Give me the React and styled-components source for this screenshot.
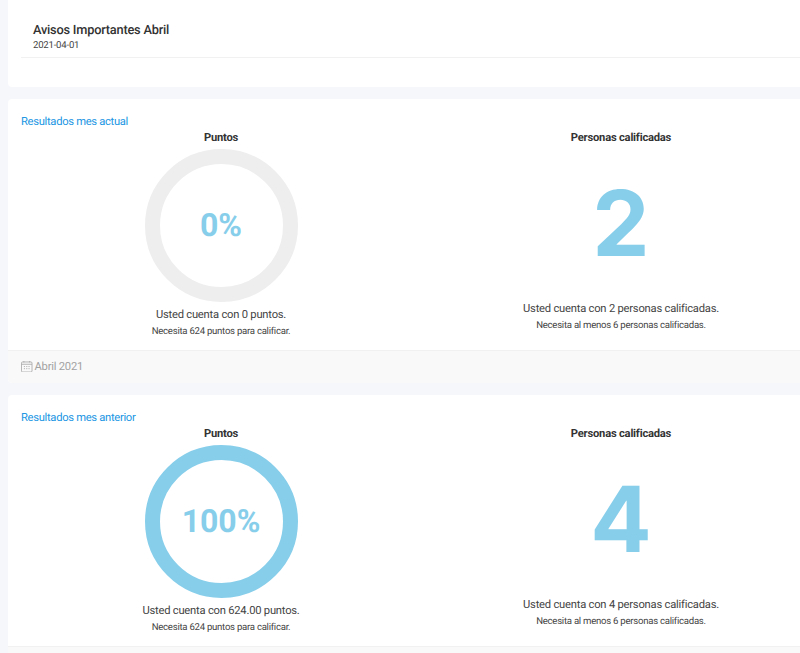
import React from 'react';
import styled, { createGlobalStyle } from 'styled-components';

const GlobalStyle = createGlobalStyle`
    html, body {
        margin: 0;
        padding: 0;
        height: 100%;
        overflow: hidden;
        background: #f5f7fb;
        font-family: Roboto, 'Liberation Sans', sans-serif;
        text-rendering: geometricPrecision;
        letter-spacing: -0.22px;
    }
`;

function CalendarIcon() {
    return (
        <svg width="11.5" height="11.5" viewBox="0 0 12 12" fill="none" stroke="#a9a9a9" strokeWidth="0.9">
            <rect x="0.5" y="1" width="11" height="10.5" rx="1.2" />
            <path d="M0.5 3.4H11.5M3 0V1.5M9 0V1.5" />
            <path d="M3 5.8H4.2M5.4 5.8H6.6M7.8 5.8H9M3 8H4.2M5.4 8H6.6M7.8 8H9" />
        </svg>
    );
}

function Results({ title, percent, ringFull, pointsText, people, peopleText, footer }) {
    return (
        <Card>
            <CardBody>
                <CardTitle>{title}</CardTitle>
                <Columns>
                    <Column>
                        <ColumnTitle>Puntos</ColumnTitle>
                        <Ring $full={ringFull}>{percent}</Ring>
                        <MainText>{pointsText}</MainText>
                        <SmallText>Necesita 624 puntos para calificar.</SmallText>
                    </Column>
                    <Column>
                        <ColumnTitle>Personas calificadas</ColumnTitle>
                        <BigNumber>{people}</BigNumber>
                        <MainText>{peopleText}</MainText>
                        <SmallText>Necesita al menos 6 personas calificadas.</SmallText>
                    </Column>
                </Columns>
            </CardBody>
            {footer && (
                <CardFooter>
                    <CalendarIcon />
                    {footer}
                </CardFooter>
            )}
        </Card>
    );
}

export default function App() {
    return (
        <Page>
            <GlobalStyle />
            <NoticeCard>
                <NoticeItem>
                    <NoticeTitle>Avisos Importantes Abril</NoticeTitle>
                    <NoticeDate>2021-04-01</NoticeDate>
                </NoticeItem>
            </NoticeCard>
            <Results
                title="Resultados mes actual"
                percent="0%"
                pointsText="Usted cuenta con 0 puntos."
                people="2"
                peopleText="Usted cuenta con 2 personas calificadas."
                footer="Abril 2021"
            />
            <Results
                title="Resultados mes anterior"
                percent="100%"
                ringFull
                pointsText="Usted cuenta con 624.00 puntos."
                people="4"
                peopleText="Usted cuenta con 4 personas calificadas."
                footer=" "
            />
        </Page>
    );
}

const Page = styled.div`
    display: flex;
    flex-direction: column;
    gap: 12px;
    width: 826px;
    height: 653px;
    padding-left: 8px;
    overflow: hidden;
`;

const Card = styled.div`
    flex-shrink: 0;
    background: #fff;
    border-radius: 4px;
    overflow: hidden;
`;

const NoticeCard = styled(Card)`
    height: 87px;
    padding: 0 13px;
    box-sizing: border-box;
    border-radius: 0 0 4px 4px;
`;

const NoticeItem = styled.div`
    height: 58px;
    padding: 22px 0 0 12px;
    box-sizing: border-box;
    border-bottom: 1px solid #f1f1f1;
`;

const NoticeTitle = styled.div`
    font-size: 12.8px;
    line-height: 17px;
    font-weight: 500;
    color: #333;
`;

const NoticeDate = styled.div`
    font-size: 9.6px;
    line-height: 13px;
    color: #444;
`;

const CardBody = styled.div`
    padding: 15px 13px 0;
    height: 236px;
`;

const CardTitle = styled.div`
    font-size: 11.2px;
    line-height: 16px;
    letter-spacing: -0.3px;
    color: #2196e3;
`;

const Columns = styled.div`
    display: grid;
    grid-template-columns: 400px 400px;
`;

const Column = styled.div`
    display: flex;
    flex-direction: column;
    align-items: center;
`;

const ColumnTitle = styled.div`
    font-size: 11.2px;
    line-height: 16px;
    font-weight: 700;
    color: #333;
    margin-bottom: 3px;
`;

const Ring = styled.div`
    display: flex;
    align-items: center;
    justify-content: center;
    box-sizing: border-box;
    width: 153px;
    height: 153px;
    padding-bottom: 2px;
    border-radius: 50%;
    border: 15px solid ${(p) => (p.$full ? '#87ceeb' : '#eeeeee')};
    font-size: 32px;
    font-weight: 700;
    letter-spacing: 0;
    color: #87ceeb;
    margin-bottom: 5px;
`;

const BigNumber = styled.div`
    height: 152px;
    font-size: 91px;
    line-height: 149px;
    font-weight: 700;
    letter-spacing: 0;
    color: #87ceeb;
    font-family: Inter, Roboto, sans-serif;
`;

const MainText = styled.div`
    font-size: 11.2px;
    line-height: 16px;
    color: #444;
`;

const SmallText = styled.div`
    font-size: 9.6px;
    line-height: 17px;
    letter-spacing: -0.26px;
    color: #444;
`;

const CardFooter = styled.div`
    display: flex;
    align-items: center;
    gap: 2px;
    height: 33px;
    padding: 0 0 1px 13px;
    box-sizing: border-box;
    background: #f9f9f9;
    border-top: 1px solid #f1f1f1;
    font-size: 11.2px;
    color: #a2a2a2;
`;
